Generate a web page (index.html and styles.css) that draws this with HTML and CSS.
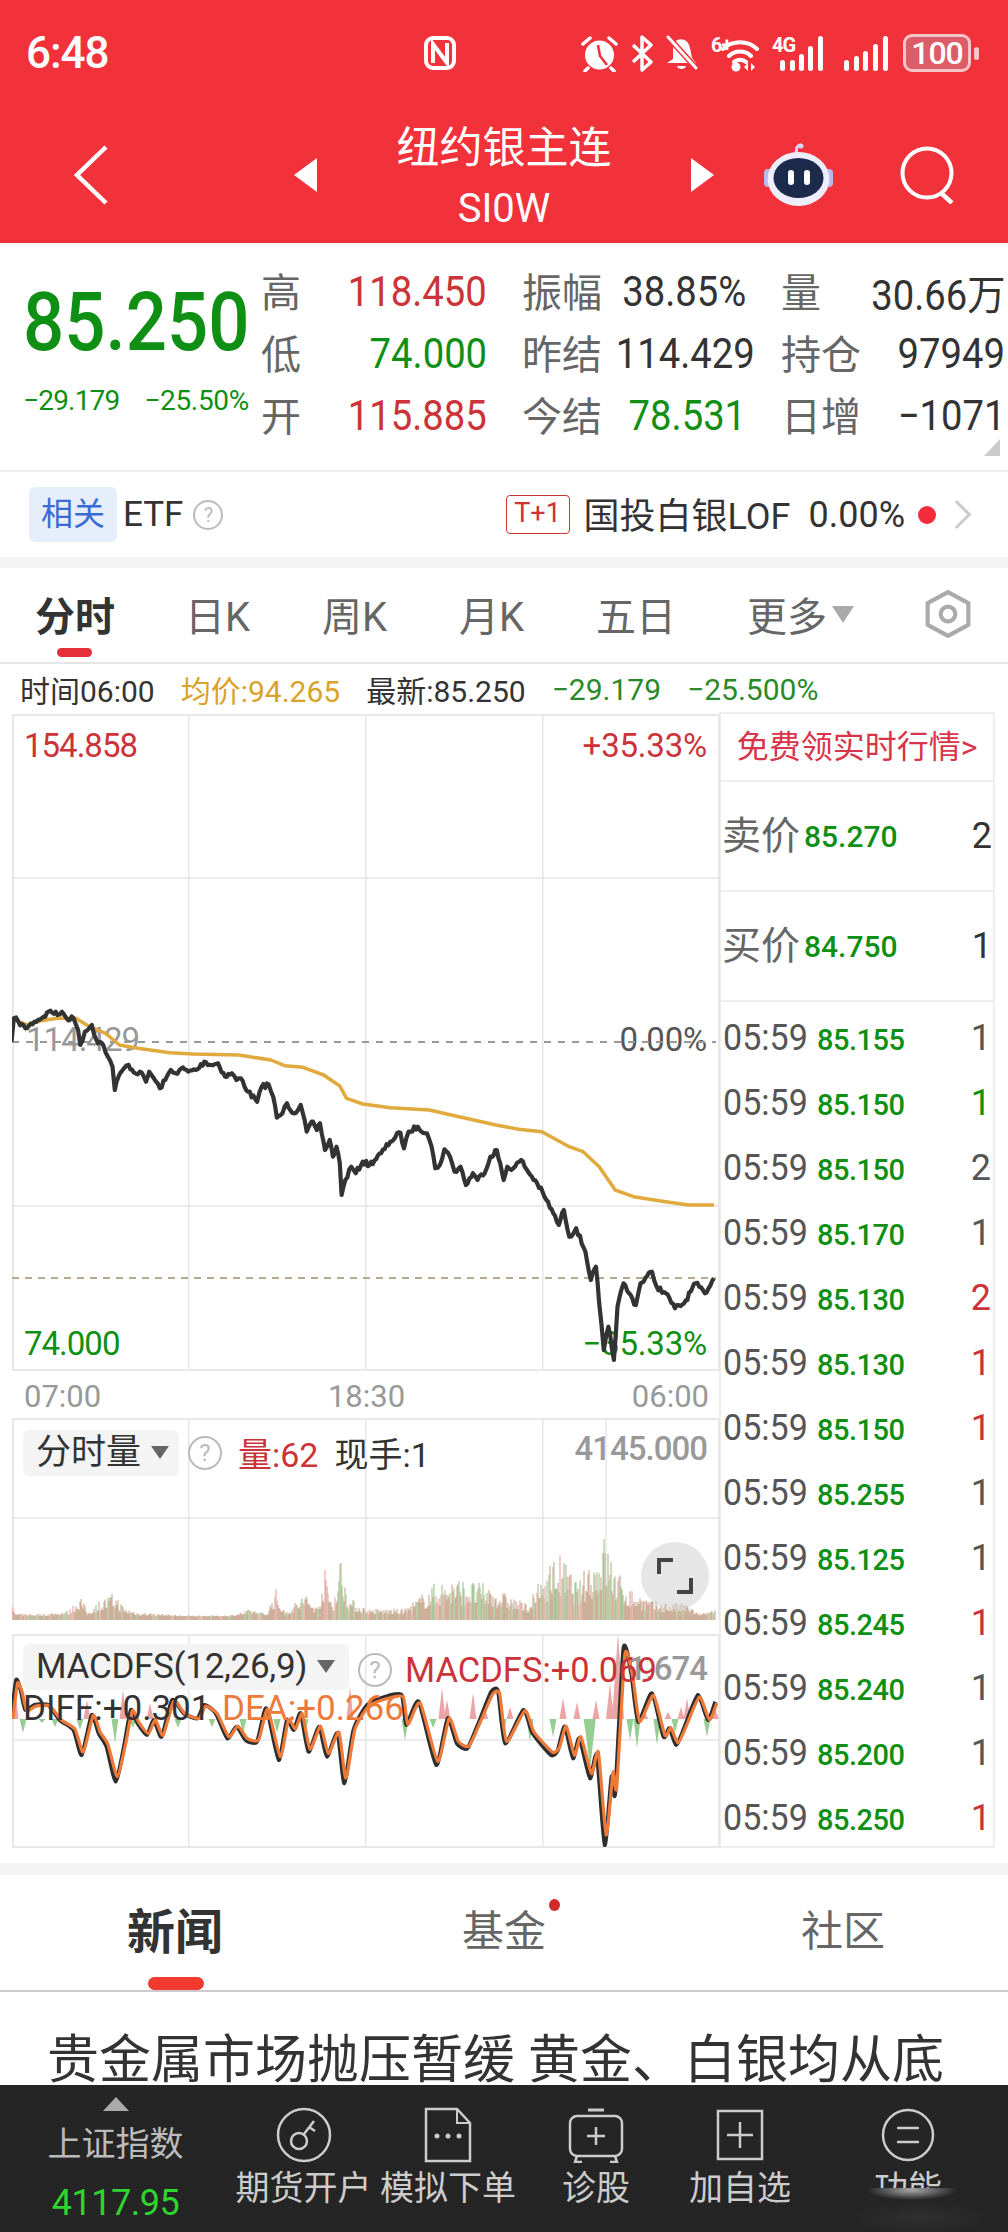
FILE: index.html
```html
<!DOCTYPE html>
<html lang="zh-CN">
<head>
  <meta charset="UTF-8">
  <meta name="viewport" content="width=device-width, initial-scale=1.0">
  <title>纽约银主连</title>
  <link rel="stylesheet" href="styles.css">
</head>
<body>
  <header class="top">
    <div class="status">
      <span class="clock">6:48</span>
      <svg class="nfc" viewBox="0 0 32 34"><rect x="2" y="2" width="28" height="30" rx="7" fill="none" stroke="#fff" stroke-width="4"/><path d="M9 27V8l14 19V7" fill="none" stroke="#fff" stroke-width="4"/></svg>
      <div class="sys">
        <svg width="37" height="37" viewBox="0 0 37 37"><circle cx="18.500" cy="20" r="14.500" fill="#fff"/><path d="M17 10l2 11 7 9" fill="none" stroke="#f1323b" stroke-width="2.500"/><path d="M2 9l7-6M35 9l-7-6M7 33l-3 3M30 33l3 3" stroke="#fff" stroke-width="3.500" stroke-linecap="round"/></svg>
        <svg width="22" height="37" viewBox="0 0 22 37"><path d="M2 10l18 17-9 8V2l9 8L2 27" fill="none" stroke="#fff" stroke-width="3.500" stroke-linejoin="round"/></svg>
        <svg width="32" height="37" viewBox="0 0 32 37"><path d="M7 9c4-7 15-7 17 4l2 10 4 5H1l6-4z" fill="#fff"/><path d="M11 31h9c-1 4-8 4-9 0z" fill="#fff"/><path d="M3 3l28 31" stroke="#f1323b" stroke-width="6"/><path d="M2 2l28 31" stroke="#fff" stroke-width="3" stroke-linecap="round"/></svg>
        <div class="net">
          <span class="net-tag">6+</span>
          <svg width="48" height="37" viewBox="0 0 48 37"><path d="M12 14c9-9 25-9 34 0M18 21c6-6 16-6 22 0M23 27c3-3 9-3 12 0" fill="none" stroke="#fff" stroke-width="4" stroke-linecap="round"/><circle cx="25" cy="32" r="4.500" fill="#fff"/><path d="M37 28v8l-4-4zM40 28v8l4-4z" fill="#fff"/></svg>
        </div>
        <div class="net">
          <span class="net-tag">4G</span>
          <svg width="51" height="37" viewBox="0 0 51 37"><rect x="8" y="25" width="5" height="11" rx="2.500" fill="#fff"/><rect x="18" y="25" width="5" height="11" rx="2.500" fill="#fff"/><rect x="27" y="19" width="5" height="17" rx="2.500" fill="#fff"/><rect x="36" y="11" width="5" height="25" rx="2.500" fill="#fff"/><rect x="46" y="1" width="5" height="35" rx="2.500" fill="#fff"/></svg>
        </div>
        <svg class="sig" width="44" height="37" viewBox="0 0 44 37"><rect x="0" y="25" width="5" height="11" rx="2.500" fill="#fff"/><rect x="10" y="21" width="5" height="15" rx="2.500" fill="#fff"/><rect x="19" y="16" width="5" height="20" rx="2.500" fill="#fff"/><rect x="29" y="9" width="5" height="27" rx="2.500" fill="#fff"/><rect x="39" y="1" width="5" height="35" rx="2.500" fill="#fff"/></svg>
        <div class="batt"><span>100</span></div>
      </div>
    </div>
    <nav class="nav">
      <svg class="back" viewBox="0 0 34 60"><path d="M32 2L3 30l29 28" fill="none" stroke="#fff" stroke-width="4.500"/></svg>
      <span class="tri-left"></span>
      <div class="title">
        <div class="name">纽约银主连</div>
        <div class="code">SI0W</div>
      </div>
      <span class="tri-right"></span>
      <svg class="robot" viewBox="0 0 69 63"><path d="M33 12c-2-5 0-10 4-10" fill="none" stroke="#d7d6f5" stroke-width="3"/><circle cx="37" cy="3" r="2.500" fill="#d7d6f5"/><rect x="0" y="26" width="8" height="18" rx="4" fill="#b9b7ee"/><rect x="61" y="26" width="8" height="18" rx="4" fill="#b9b7ee"/><ellipse cx="34.500" cy="36" rx="31" ry="27" fill="#eeedfb"/><ellipse cx="34.500" cy="35" rx="25" ry="20" fill="#1c2a4c"/><rect x="24" y="27" width="6" height="15" rx="3" fill="#fff"/><rect x="40" y="27" width="6" height="15" rx="3" fill="#fff"/></svg>
      <svg class="search" viewBox="0 0 56 58"><circle cx="27" cy="27" r="24.500" fill="none" stroke="#fff" stroke-width="4"/><path d="M41 47l11 10" stroke="#fff" stroke-width="4.500"/></svg>
    </nav>
  </header>

  <section class="quote">
    <div class="last">
      <div class="big">85.250</div>
      <div class="chg"><span>−29.179</span><span>−25.50%</span></div>
    </div>
    <div class="stats">
      <div class="stat"><span class="lb">高</span><span class="up">118.450</span></div>
      <div class="stat"><span class="lb">振幅</span><span class="nm">38.85%</span></div>
      <div class="stat"><span class="lb">量</span><span class="nm">30.66万</span></div>
      <div class="stat"><span class="lb">低</span><span class="dn">74.000</span></div>
      <div class="stat"><span class="lb">昨结</span><span class="nm">114.429</span></div>
      <div class="stat"><span class="lb">持仓</span><span class="nm">97949</span></div>
      <div class="stat"><span class="lb">开</span><span class="up">115.885</span></div>
      <div class="stat"><span class="lb">今结</span><span class="dn">78.531</span></div>
      <div class="stat"><span class="lb">日增</span><span class="nm">−1071</span></div>
    </div>
    <span class="corner"></span>
  </section>

  <section class="related">
    <span class="chip">相关</span>
    <span class="etf">ETF</span>
    <span class="help help-etf">?</span>
    <div class="fund">
      <span class="t1">T+1</span>
      <span class="fund-name">国投白银LOF</span>
      <span class="fund-pct">0.00%</span>
      <span class="dot"></span>
      <svg class="more" viewBox="0 0 20 32"><path d="M2 1l15 15L2 31" fill="none" stroke="#ccc" stroke-width="3.500"/></svg>
    </div>
  </section>
  <div class="band"></div>

  <div class="tabs">
    <span class="tab on">分时</span>
    <span class="tab">日K</span>
    <span class="tab">周K</span>
    <span class="tab">月K</span>
    <span class="tab">五日</span>
    <span class="tab">更多<i class="tab-arrow"></i></span>
    <svg class="hex" viewBox="0 0 47 46"><path d="M23.500 2L43 12.500v21L23.500 44 4 33.500v-21z" fill="none" stroke="#aaa" stroke-width="4" stroke-linejoin="round"/><circle cx="23.500" cy="23" r="7" fill="none" stroke="#aaa" stroke-width="4"/></svg>
  </div>

  <div class="info">
    <span class="i-time">时间06:00</span>
    <span class="i-avg">均价:94.265</span>
    <span class="i-new">最新:85.250</span>
    <span class="i-chg">−29.179</span>
    <span class="i-pct">−25.500%</span>
  </div>

  <div class="market">
    <div class="charts">
      <div class="plot plot-price">
        <span class="lab lab-tl up">154.858</span>
        <span class="lab lab-tr up">+35.33%</span>
        <span class="lab lab-ml">114.429</span>
        <span class="lab lab-mr">0.00%</span>
        <span class="lab lab-bl dn">74.000</span>
        <span class="lab lab-br dn">−35.33%</span>
        <svg id="price" class="layer" viewBox="12 714 708 656"></svg>
      </div>
      <div class="axis"><span>07:00</span><span>18:30</span><span>06:00</span></div>
      <div class="plot plot-vol">
        <svg id="vol" class="layer" viewBox="12 1418 708 202"></svg>
        <div class="legend">
          <span class="pick">分时量<i class="pick-arrow"></i></span>
          <span class="help">?</span>
          <span class="v-red">量:62</span>
          <span class="v-now">现手:1</span>
        </div>
        <span class="lab lab-max">4145.000</span>
        <span class="expand"><svg width="36" height="36" viewBox="0 0 36 36"><path d="M2 16V2h14M34 20v14H20" fill="none" stroke="#444" stroke-width="4"/></svg></span>
      </div>
      <div class="plot plot-macd">
        <div class="legend legend-base">
          <span class="pick pick-macd">MACDFS(12,26,9)<i class="pick-arrow"></i></span>
        </div>
        <span class="lab lab-max lab-macd">1.674</span>
        <svg id="macd" class="layer" viewBox="12 1634 708 213"></svg>
        <span class="help help-macd">?</span>
        <span class="lab lab-macdfs">MACDFS:+0.069</span>
        <span class="lab lab-diff">DIFF:+0.301</span>
        <span class="lab lab-dea">DEA:+0.266</span>
      </div>
    </div>

    <aside class="ticks">
      <div class="free">免费领实时行情&gt;</div>
      <div class="book"><span class="book-lb">卖价</span><span class="book-px">85.270</span><span class="book-qty">2</span></div>
      <div class="book"><span class="book-lb">买价</span><span class="book-px">84.750</span><span class="book-qty">1</span></div>
      <div class="rows">
        <div class="row"><span class="t">05:59</span><span class="p">85.155</span><span class="q">1</span></div>
        <div class="row"><span class="t">05:59</span><span class="p">85.150</span><span class="q dn">1</span></div>
        <div class="row"><span class="t">05:59</span><span class="p">85.150</span><span class="q">2</span></div>
        <div class="row"><span class="t">05:59</span><span class="p">85.170</span><span class="q">1</span></div>
        <div class="row"><span class="t">05:59</span><span class="p">85.130</span><span class="q up">2</span></div>
        <div class="row"><span class="t">05:59</span><span class="p">85.130</span><span class="q up">1</span></div>
        <div class="row"><span class="t">05:59</span><span class="p">85.150</span><span class="q up">1</span></div>
        <div class="row"><span class="t">05:59</span><span class="p">85.255</span><span class="q">1</span></div>
        <div class="row"><span class="t">05:59</span><span class="p">85.125</span><span class="q">1</span></div>
        <div class="row"><span class="t">05:59</span><span class="p">85.245</span><span class="q up">1</span></div>
        <div class="row"><span class="t">05:59</span><span class="p">85.240</span><span class="q">1</span></div>
        <div class="row"><span class="t">05:59</span><span class="p">85.200</span><span class="q">1</span></div>
        <div class="row"><span class="t">05:59</span><span class="p">85.250</span><span class="q up">1</span></div>
      </div>
    </aside>
  </div>

  <div class="band band-low"></div>

  <div class="news-tabs">
    <span class="n-tab on">新闻</span>
    <span class="n-tab">基金<i class="n-dot"></i></span>
    <span class="n-tab">社区</span>
  </div>

  <div class="headline">贵金属市场抛压暂缓 黄金、白银均从底</div>

  <footer class="foot">
    <div class="index">
      <span class="index-up"></span>
      <span class="index-name">上证指数</span>
      <span class="index-val">4117.95</span>
    </div>
    <div class="act">
      <svg viewBox="0 0 56 56" width="56" height="56"><circle cx="28" cy="28" r="26" fill="none" stroke="#ccc" stroke-width="2.500"/><circle cx="23" cy="34" r="8" fill="none" stroke="#ccc" stroke-width="2.500"/><path d="M28 27l10-13M33 20l6 4" fill="none" stroke="#ccc" stroke-width="2.500"/></svg>
      <span>期货开户</span>
    </div>
    <div class="act">
      <svg viewBox="0 0 48 56" width="48" height="56"><path d="M2 2h31l13 14v38H2z" fill="none" stroke="#ccc" stroke-width="2.500"/><path d="M33 2v14h13" fill="none" stroke="#ccc" stroke-width="2"/><circle cx="13" cy="29" r="2.500" fill="#ccc"/><circle cx="24" cy="29" r="2.500" fill="#ccc"/><circle cx="35" cy="29" r="2.500" fill="#ccc"/></svg>
      <span>模拟下单</span>
    </div>
    <div class="act">
      <svg viewBox="0 0 56 56" width="56" height="56"><path d="M20 3h16" stroke="#ccc" stroke-width="3"/><rect x="2" y="9" width="52" height="40" rx="7" fill="none" stroke="#ccc" stroke-width="2.500"/><path d="M9 49l-2 6h7M47 49l2 6h-7" fill="none" stroke="#ccc" stroke-width="2.500"/><path d="M28 20v18M19 29h18" stroke="#ccc" stroke-width="2.500"/></svg>
      <span>诊股</span>
    </div>
    <div class="act">
      <svg viewBox="0 0 48 56" width="48" height="56"><rect x="2" y="4" width="44" height="48" fill="none" stroke="#ccc" stroke-width="2.500"/><path d="M24 15v26M11 28h26" stroke="#ccc" stroke-width="2.500"/></svg>
      <span>加自选</span>
    </div>
    <div class="act">
      <svg viewBox="0 0 56 56" width="56" height="56"><circle cx="28" cy="28" r="25" fill="none" stroke="#ccc" stroke-width="2.500"/><path d="M17 21h22M17 35h22" stroke="#ccc" stroke-width="2.500"/></svg>
      <span>功能</span>
    </div>
    <div class="stamp"></div>
  </footer>

  <script src="chart.js"></script>
</body>
</html>
```

FILE: styles.css
```css
*{
  box-sizing: border-box;
}
body{
  margin: 0;
  width: 1008px;
  height: 2232px;
  overflow: hidden;
  background: #fff;
  color: #333;
  font-family: Roboto, "Noto Sans CJK SC", sans-serif;
}
i{
  font-style: normal;
}
.up{ color: #cc3338; }
.dn{ color: #0f8f14; }
.nm{ color: #333; }

/* red header */
.top{
  height: 243px;
  background: #f1323b;
  color: #fff;
}
.status{
  height: 106px;
  display: flex;
  align-items: center;
  padding: 0 31px 0 26px;
}
.clock{
  width: 398px;
  font-size: 44px;
  font-weight: 500;
  letter-spacing: -1px;
}
.nfc{
  width: 32px;
  height: 34px;
}
.sys{
  margin-left: auto;
  display: flex;
  align-items: center;
  gap: 13px;
}
.net{
  position: relative;
  height: 37px;
}
.net-tag{
  position: absolute;
  left: 0;
  top: 0;
  font-size: 20px;
  font-weight: 700;
  letter-spacing: -1px;
  line-height: 20px;
}
.sig{
  margin-left: 8px;
}
.batt{
  position: relative;
  width: 68px;
  height: 38px;
  margin-left: 2px;
  margin-right: 6px;
  border: 3px solid #f9c5c8;
  border-radius: 9px;
  background: #dc5c67;
  font-size: 32px;
  font-weight: 500;
  letter-spacing: -1px;
  line-height: 32px;
  text-align: center;
}
.batt::after{
  content: '';
  position: absolute;
  right: -11px;
  top: 10px;
  width: 5px;
  height: 13px;
  border-radius: 3px;
  background: #f9c5c8;
}
.nav{
  height: 137px;
  display: flex;
  align-items: center;
  padding-left: 74px;
}
.back{
  width: 34px;
  height: 60px;
}
.tri-left,.tri-right{
  width: 0;
  height: 0;
  border-top: 17px solid transparent;
  border-bottom: 17px solid transparent;
}
.tri-left{
  margin-left: 186px;
  border-right: 23px solid #fff;
}
.tri-right{
  border-left: 23px solid #fff;
}
.title{
  width: 374px;
  margin-top: 13px;
  text-align: center;
}
.name{
  font-size: 43px;
  line-height: 56px;
}
.code{
  font-size: 40px;
  line-height: 66px;
}
.robot{
  margin-left: 50px;
  width: 69px;
  height: 63px;
}
.search{
  margin-left: 67px;
  width: 56px;
  height: 58px;
}

/* quote block */
.quote{
  position: relative;
  height: 229px;
  display: flex;
  padding-left: 23px;
  border-bottom: 2px solid #eee;
}
.last{
  width: 238px;
}
.big{
  margin-top: 37px;
  font-size: 82px;
  line-height: 84px;
  font-weight: 500;
  color: #0f8f14;
  white-space: nowrap;
  transform: scaleX(0.885);
  transform-origin: left center;
}
.chg{
  display: flex;
  justify-content: space-between;
  width: 226px;
  margin-top: 19px;
  font-size: 28px;
  line-height: 36px;
  letter-spacing: -0.800px;
  color: #0f8f14;
}
.chg span:last-child{
  letter-spacing: -0.300px;
}
.stats{
  display: grid;
  grid-template-columns: 226px 224px 224px;
  column-gap: 35px;
  grid-auto-rows: 62px;
  padding-top: 17px;
}
.stat{
  display: flex;
  justify-content: space-between;
  align-items: center;
  font-size: 42px;
  white-space: nowrap;
}
.stat span:last-child{
  transform: scaleX(0.91);
  transform-origin: right center;
}
.lb{
  margin-top: -3px;
  font-size: 40px;
  color: #666;
}
.corner{
  position: absolute;
  right: 8px;
  bottom: 14px;
  border-left: 16px solid transparent;
  border-bottom: 17px solid #ccc;
}

/* related row */
.related{
  height: 85px;
  display: flex;
  align-items: center;
  padding: 0 36px 0 29px;
}
.chip{
  width: 88px;
  height: 55px;
  border-radius: 6px;
  background: #e6eefb;
  color: #3a6cd6;
  font-size: 32px;
  line-height: 55px;
  text-align: center;
}
.etf{
  margin-left: 6px;
  font-size: 35px;
}
.help{
  width: 34px;
  height: 34px;
  border: 2px solid #bbb;
  border-radius: 50%;
  color: #bbb;
  font-size: 24px;
  line-height: 30px;
  text-align: center;
}
.help-etf{
  width: 30px;
  height: 30px;
  margin-left: 10px;
  font-size: 20px;
  line-height: 26px;
}
.fund{
  margin-left: auto;
  display: flex;
  align-items: center;
}
.t1{
  width: 64px;
  height: 39px;
  border: 1.500px solid #c33;
  border-radius: 4px;
  color: #c33;
  font-size: 27px;
  line-height: 35px;
  text-align: center;
}
.fund-name{
  margin-left: 14px;
  margin-top: -4px;
  font-size: 36px;
}
.fund-pct{
  margin-left: 18px;
  font-size: 36px;
}
.dot{
  margin-left: 13px;
  width: 18px;
  height: 18px;
  border-radius: 50%;
  background: #f22c3d;
}
.more{
  margin-left: 18px;
  width: 18px;
  height: 31px;
}
.band{
  height: 11px;
  background: #f4f4f4;
}

/* period tabs */
.tabs{
  height: 96px;
  display: grid;
  grid-template-columns: 150px 137px 137px 137px 151px 176px auto;
  align-items: center;
  padding: 0 0 2px 35px;
  border-bottom: 2px solid #e6e6e6;
}
.tab{
  position: relative;
  font-size: 40px;
  color: #666;
  white-space: nowrap;
}
.tab.on{
  font-weight: 700;
  color: #333;
}
.tab.on::after{
  content: '';
  position: absolute;
  left: 22px;
  top: 63px;
  width: 35px;
  height: 9px;
  border-radius: 5px;
  background: #e5303a;
}
.tab-arrow{
  display: inline-block;
  margin-left: 5px;
  vertical-align: 8px;
  border-left: 11px solid transparent;
  border-right: 11px solid transparent;
  border-top: 17px solid #aaa;
}
.hex{
  width: 50px;
  height: 48px;
}

/* info line */
.info{
  height: 48px;
  display: flex;
  align-items: center;
  padding: 2px 0 0 20px;
  font-size: 30px;
  white-space: nowrap;
}
.i-avg{ margin-left: 26px; color: #d9a32a; }
.i-new{ margin-left: 26px; }
.i-chg{ margin-left: 26px; color: #2a8a2a; }
.i-pct{ margin-left: 26px; color: #2a8a2a; }

/* charts */
.market{
  display: flex;
  height: 1136px;
}
.charts{
  width: 708px;
  margin-left: 12px;
  padding-top: 2px;
}
.plot{
  position: relative;
  border: 2px solid #e8e8e8;
  background-image:
    linear-gradient(#e6e6e6, #e6e6e6),
    linear-gradient(#e6e6e6, #e6e6e6),
    linear-gradient(#e6e6e6, #e6e6e6);
  background-size: 1.500px 100%;
  background-position: 174px 0, 351px 0, 528px 0;
  background-repeat: no-repeat;
}
.plot-price{
  height: 657px;
}
.plot-vol{
  height: 202px;
  border-bottom: 0;
}
.plot-macd{
  height: 214px;
  margin-top: 14px;
}
.layer{
  position: absolute;
  left: -2px;
  top: -2px;
  width: 708px;
}
.plot-price .layer{ height: 656px; }
.plot-vol .layer{ height: 202px; }
.plot-macd .layer{ height: 213px; }
.lab{
  position: absolute;
  font-size: 33px;
  letter-spacing: -1px;
  line-height: 38px;
  white-space: nowrap;
}
.lab-tl{ left: 10px; top: 11px; }
.lab-tr{ right: 11px; top: 11px; letter-spacing: -0.200px; }
.lab-ml{ left: 12px; top: 305px; color: #999; }
.lab-mr{ right: 11px; top: 305px; color: #555; letter-spacing: -0.200px; }
.lab-bl{ left: 10px; top: 609px; }
.lab-br{ right: 11px; top: 609px; letter-spacing: -0.200px; }
.axis{
  height: 47px;
  display: flex;
  justify-content: space-between;
  align-items: center;
  padding: 4px 11px 0 12px;
  font-size: 31px;
  color: #999;
}
.legend{
  position: absolute;
  left: 9px;
  top: 8px;
  display: flex;
  align-items: center;
  white-space: nowrap;
}
.pick{
  height: 46px;
  padding: 0 10px 0 13px;
  border-radius: 6px;
  background: #f4f4f4;
  font-size: 35px;
  line-height: 46px;
}
.pick-macd{
  width: 326px;
  padding-right: 0;
  letter-spacing: -0.300px;
}
.pick-arrow{
  display: inline-block;
  margin-left: 10px;
  vertical-align: 5px;
  border-left: 9px solid transparent;
  border-right: 9px solid transparent;
  border-top: 13px solid #666;
}
.legend .help{
  margin-left: 9px;
}
.v-red{
  margin-left: 16px;
  font-size: 34px;
  color: #cc3338;
}
.v-now{
  margin-left: 16px;
  font-size: 34px;
}
.lab-max{
  right: 11px;
  top: 10px;
  font-weight: 500;
  color: #999;
}
.lab-macd{
  top: 14px;
}
.expand{
  position: absolute;
  left: 627px;
  top: 122px;
  width: 68px;
  height: 68px;
  border-radius: 50%;
  background: rgba(205, 205, 205, 0.5);
  display: flex;
  justify-content: center;
  align-items: center;
}
.help-macd{
  position: absolute;
  left: 344px;
  top: 17px;
}
.lab-macdfs{
  left: 391px;
  top: 15px;
  font-size: 34.500px;
  letter-spacing: 0;
  color: #cc3338;
}
.lab-diff{
  left: 9px;
  top: 54px;
  font-size: 35px;
  letter-spacing: 0;
}
.lab-dea{
  left: 208px;
  top: 54px;
  font-size: 35px;
  letter-spacing: 0;
  color: #ee7a3a;
}

/* tick list */
.ticks{
  width: 276px;
  margin-left: -1px;
  height: 1136px;
  border: 2px solid #eee;
}
.free{
  height: 68px;
  border-bottom: 2px solid #eee;
  color: #d8344a;
  font-size: 32px;
  line-height: 66px;
  text-align: center;
  white-space: nowrap;
}
.book{
  height: 110px;
  display: flex;
  align-items: center;
  padding: 0 1px 0 1px;
  border-bottom: 2px solid #eee;
}
.book-lb{
  margin-top: -8px;
  font-size: 39px;
  color: #666;
}
.book-px{
  margin-left: 4px;
  font-size: 30px;
  font-weight: 500;
  color: #0f8f14;
}
.book-qty{
  margin-left: auto;
  font-size: 36px;
}
.rows{
  padding-top: 3px;
}
.row{
  height: 65px;
  display: flex;
  align-items: center;
  padding: 0 2px 0 2px;
}
.t{
  width: 94px;
  font-size: 37px;
  color: #555;
  transform: scaleX(0.92);
  transform-origin: left center;
}
.p{
  margin-top: 4px;
  font-size: 29px;
  font-weight: 500;
  letter-spacing: -0.500px;
  color: #0f8f14;
}
.q{
  margin-left: auto;
  font-size: 36px;
  color: #555;
}
.q.dn{ color: #0f8f14; }
.q.up{ color: #cc3338; }

.band-low{
  height: 12px;
  margin-top: 15px;
}

/* news tabs */
.news-tabs{
  height: 117px;
  position: relative;
  border-bottom: 2px solid #ccc;
  display: flex;
  align-items: center;
  padding: 0 0 10px 127px;
}
.n-tab{
  position: relative;
  font-size: 42px;
  color: #666;
  white-space: nowrap;
}
.n-tab + .n-tab{
  margin-left: 239px;
}
.n-tab + .n-tab + .n-tab{
  margin-left: 255px;
}
.n-tab.on{
  font-size: 48px;
  font-weight: 700;
  color: #333;
}
.n-tab.on::after{
  content: '';
  position: absolute;
  left: 21px;
  top: 84px;
  width: 56px;
  height: 13px;
  border-radius: 7px;
  background: #f03a30;
}
.n-dot{
  position: absolute;
  right: -14px;
  top: 2px;
  width: 11px;
  height: 12px;
  border-radius: 50%;
  background: #d22a2a;
}
.headline{
  height: 93px;
  overflow: hidden;
  padding: 34px 0 0 47px;
  font-size: 52px;
  line-height: 70px;
  white-space: nowrap;
}

/* bottom bar */
.foot{
  position: relative;
  height: 147px;
  background: #252525;
  color: #ccc;
  display: grid;
  grid-template-columns: 231px 145px 144px 152px 136px 200px;
}
.index{
  display: flex;
  flex-direction: column;
  align-items: center;
  padding-top: 12px;
}
.index-up{
  border-left: 13px solid transparent;
  border-right: 13px solid transparent;
  border-bottom: 14px solid #aaa;
}
.index-name{
  font-size: 34px;
  line-height: 46px;
  margin-top: 10px;
  color: #bbb;
}
.index-val{
  font-size: 36px;
  letter-spacing: -0.500px;
  line-height: 50px;
  margin-top: 11px;
  color: #2fd52f;
}
.act{
  display: flex;
  flex-direction: column;
  align-items: center;
  padding-top: 22px;
}
.act span{
  font-size: 34px;
  line-height: 50px;
  white-space: nowrap;
}
.stamp{
  position: absolute;
  left: 830px;
  top: 103px;
  width: 178px;
  height: 44px;
  background:
    radial-gradient(ellipse 45px 10px at 82px 2px, rgba(255, 255, 255, 0.6), transparent),
    radial-gradient(ellipse 70px 16px at 90px 30px, rgba(255, 255, 255, 0.05), transparent),
    #252525;
}
```

FILE: chart.js
```js
// draws the price, volume and macd layers, all points in page pixels
const NS = 'http://www.w3.org/2000/svg';
let seed = 7;
const rnd = () => {
  seed = (seed * 16807) % 2147483647;
  return seed / 2147483647;
};
const add = (svg, tag, attrs) => {
  const el = document.createElementNS(NS, tag);
  for (const k in attrs) el.setAttribute(k, attrs[k]);
  svg.appendChild(el);
};
const line = (svg, pts, color, w) => add(svg, 'polyline', {
  points: pts.map(p => p[0].toFixed(1) + ',' + p[1].toFixed(1)).join(' '),
  fill: 'none', stroke: color, 'stroke-width': w, 'stroke-linejoin': 'round'
});
// slightly rounded line through the points, for the macd curves
const curve = (svg, pts, color, w) => {
  let d = 'M' + pts[0][0] + ' ' + pts[0][1];
  for (let i = 0; i < pts.length - 1; i++) {
    const a = pts[Math.max(i - 1, 0)], b = pts[i], c = pts[i + 1], e = pts[Math.min(i + 2, pts.length - 1)];
    d += 'C' + (b[0] + (c[0] - a[0]) / 10).toFixed(1) + ' ' + (b[1] + (c[1] - a[1]) / 10).toFixed(1) + ' ' +
      (c[0] - (e[0] - b[0]) / 10).toFixed(1) + ' ' + (c[1] - (e[1] - b[1]) / 10).toFixed(1) + ' ' +
      c[0].toFixed(1) + ' ' + c[1].toFixed(1);
  }
  add(svg, 'path', { d, fill: 'none', stroke: color, 'stroke-width': w, 'stroke-linejoin': 'round' });
};
// the reference crops were read at 2.178x wide and 3x high
const fromCrop = (flat, top) => {
  const out = [];
  for (let i = 0; i < flat.length; i += 2) out.push([flat[i] / 2.178, flat[i + 1] / 3 + top]);
  return out;
};
const jag = (pts, amp) => {
  const out = [];
  for (let i = 0; i < pts.length - 1; i++) {
    const [x0, y0] = pts[i], [x1, y1] = pts[i + 1];
    out.push(pts[i]);
    const n = Math.floor((x1 - x0) / 1.6);
    for (let j = 1; j < n; j++) {
      const t = j / n;
      out.push([x0 + (x1 - x0) * t, y0 + (y1 - y0) * t + (rnd() - 0.5) * amp]);
    }
  }
  out.push(pts[pts.length - 1]);
  return out;
};

const priceSvg = document.getElementById('price');
const GRID = '#e6e6e6';
add(priceSvg, 'line', { x1: 12, x2: 720, y1: 878, y2: 878, stroke: GRID, 'stroke-width': 1.5 });
add(priceSvg, 'line', { x1: 12, x2: 720, y1: 1206, y2: 1206, stroke: GRID, 'stroke-width': 1.5 });
add(priceSvg, 'line', { x1: 12, x2: 716, y1: 1042, y2: 1042, stroke: '#999', 'stroke-width': 2, 'stroke-dasharray': '7 7' });
add(priceSvg, 'line', { x1: 12, x2: 716, y1: 1278, y2: 1278, stroke: '#b5ab90', 'stroke-width': 2, 'stroke-dasharray': '7 6' });

const avg = fromCrop([27,205,40,215,60,225,90,212,125,205,165,205,195,230,230,250,260,285,300,295,370,308,420,312,520,315,590,330,620,347,660,352,705,375,740,408,755,445,790,462,850,473,935,480,1000,500,1080,525,1130,538,1180,545,1240,590,1270,605,1305,650,1340,720,1380,740,1450,755,1500,765,1555,765], 950);
line(priceSvg, avg, '#e0aa3e', 3.5);

const px = fromCrop([25,275,30,205,40,215,55,235,75,215,95,200,110,182,125,195,135,185,145,205,160,205,170,240,175,285,185,245,200,225,210,270,225,285,235,320,245,350,250,420,258,380,270,355,280,345,295,370,305,365,318,395,325,365,335,385,348,415,360,390,372,360,382,370,395,355,410,365,430,358,445,335,460,345,475,340,490,380,505,370,515,390,525,385,540,425,560,455,570,410,585,403,595,440,603,503,615,490,625,460,640,490,655,465,668,545,682,515,690,540,697,520,708,600,718,570,725,620,733,590,740,640,744,735,752,690,765,650,775,670,790,635,805,645,830,610,850,575,872,548,880,595,890,545,910,530,930,550,940,590,948,655,958,645,968,598,980,620,990,665,1003,650,1015,705,1030,670,1040,690,1060,655,1068,620,1082,600,1097,690,1105,650,1118,655,1135,630,1150,665,1170,700,1190,750,1205,790,1217,825,1228,780,1240,860,1255,835,1275,905,1287,990,1298,950,1305,1060,1315,1200,1325,1130,1337,1230,1345,1070,1358,1000,1370,1030,1385,1065,1395,1000,1420,965,1430,1010,1450,1030,1470,1075,1490,1060,1515,1000,1535,1030,1555,985], 950);
line(priceSvg, jag(px, 5), '#333', 4.2);

// volume: envelope of the peaks, bars 1px wide
const volSvg = document.getElementById('vol');
add(volSvg, 'line', { x1: 12, x2: 720, y1: 1518, y2: 1518, stroke: GRID, 'stroke-width': 1.5 });
add(volSvg, 'line', { x1: 606, x2: 606, y1: 1418, y2: 1620, stroke: GRID, 'stroke-width': 1.5 });
const env = [25,40,35,10,100,10,150,20,175,70,190,15,215,50,250,75,270,30,300,15,400,5,500,5,550,25,580,10,600,90,620,15,665,75,690,30,707,150,725,40,742,195,760,60,800,25,880,25,948,105,990,120,1060,100,1090,80,1150,40,1190,150,1215,200,1240,150,1260,100,1280,170,1300,190,1317,255,1340,150,1370,90,1420,50,1500,40,1520,10,1558,20];
const envAt = (zx) => {
  for (let i = 0; i < env.length - 2; i += 2) {
    if (zx <= env[i + 2]) return env[i + 1] + (env[i + 3] - env[i + 1]) * (zx - env[i]) / (env[i + 2] - env[i]);
  }
  return 5;
};
const bars = { '#cdb09a': '', '#a6c896': '', '#efa8a8': '' };
for (let x = 12; x < 716; x++) {
  const h = envAt(x * 2.178) / 3 * (0.3 + 0.7 * Math.pow(rnd(), 1.3)) + 3;
  const r = rnd();
  const big = h > 30;
  const c = r < (big ? 0.3 : 0.85) ? '#cdb09a' : r < (big ? 0.88 : 0.95) ? '#a6c896' : '#efa8a8';
  bars[c] += 'M' + x + ' 1620V' + (1620 - h).toFixed(1);
}
for (const c in bars) add(volSvg, 'path', { d: bars[c], stroke: c, 'stroke-width': 1.2, fill: 'none' });

// macd
const macdSvg = document.getElementById('macd');
add(macdSvg, 'line', { x1: 12, x2: 720, y1: 1740, y2: 1740, stroke: GRID, 'stroke-width': 1.5 });
const BASE = 1719;
const reds = [15,1687,87,1700,123,1690,150,1703,350,1687,442,1688,447,1700,473,1693,485,1710,510,1707,563,1698,577,1702,596,1700,610,1683,618,1633,645,1713,668,1712,681,1707,687,1698,715,1707];
const greens = [5,1742,23,1733,42,1723,55,1727,80,1730,115,1743,133,1728,178,1728,212,1727,243,1733,277,1733,305,1733,405,1740,433,1728,503,1740,530,1742,553,1737,587,1740,590,1770,630,1740,637,1748,657,1745,675,1733,707,1737];
const hist = (list, color) => {
  for (let i = 0; i < list.length; i += 2) {
    const x = list[i], y = list[i + 1];
    const w = Math.min(6, Math.max(3.5, Math.abs(y - BASE) / 9));
    add(macdSvg, 'polygon', { points: (x - w) + ',' + BASE + ' ' + x + ',' + y + ' ' + (x + w) + ',' + BASE, fill: color });
  }
};
hist(reds, '#eba5a5');
hist(greens, '#97cc92');

const diff = fromCrop([25,1015,35,900,45,930,55,990,75,975,105,975,130,1020,160,1050,178,1125,200,1005,215,1060,232,1100,252,1205,270,1100,285,990,300,1030,320,1065,335,1020,352,1070,375,960,400,1000,430,1015,445,975,470,1000,495,1075,515,1040,535,1080,560,1085,580,985,607,1140,625,1020,640,1050,655,1000,672,1115,695,1040,712,1130,735,1060,750,1210,770,1050,800,975,840,950,875,945,885,1035,912,965,950,1155,975,1015,995,1090,1018,1105,1045,1020,1070,935,1085,935,1100,1090,1140,990,1160,1060,1200,1125,1215,1110,1230,1040,1248,1135,1262,1075,1285,1195,1300,1125,1317,1395,1332,1190,1340,1240,1358,805,1375,880,1390,1025,1420,940,1445,1070,1458,1045,1473,1095,1490,1045,1520,945,1542,1020,1558,965], 1380);
curve(macdSvg, diff, '#2e2e2e', 4);
const dea = diff.map(p => [p[0] + 1.5, BASE + (p[1] - BASE) * 0.92]);
curve(macdSvg, dea, '#ee7a3a', 3.2);
```
